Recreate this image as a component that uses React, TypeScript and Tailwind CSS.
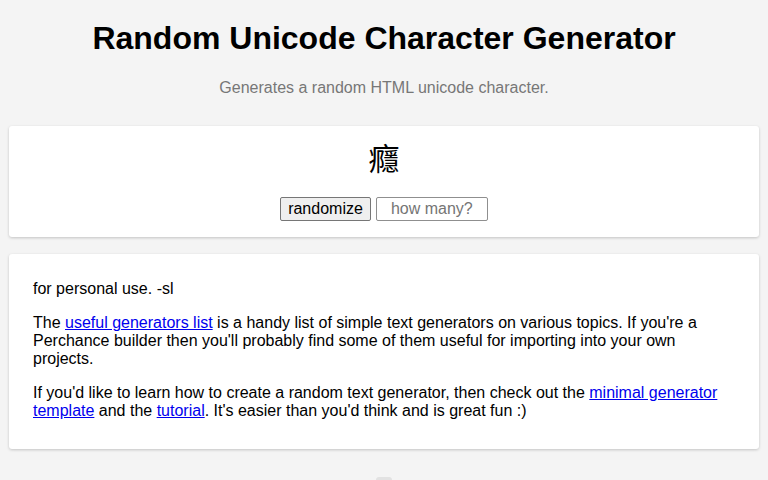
import React from "react";

export default function App() {
  return (
    <div className="min-h-[480px] bg-[#f4f4f4] text-black overflow-hidden h-[480px]" style={{ fontFamily: '"Liberation Sans", Arial, sans-serif' }}>
      <h1 className="text-[32px] font-bold text-center leading-[37px] pt-[20px]">Random Unicode Character Generator</h1>
      <p className="text-[16px] text-[#777] text-center leading-[18px] mt-[22px]">Generates a random HTML unicode character.</p>
      <div className="px-[9px] mt-[29px]">
        <div className="bg-white rounded-[3px] shadow-[0_1px_3px_rgba(0,0,0,0.2)] pt-[11px] pb-[16px] flex flex-col items-center">
          <div className="text-[31px] leading-[40px]" style={{ fontFamily: '"Noto Sans CJK SC", "Noto Sans CJK JP", sans-serif' }}>癮</div>
          <div className="flex gap-[5px] mt-[20px]">
            <button className="h-[24px] px-[7px] text-[16px] leading-[18px] bg-[#efefef] border border-[#767676] rounded-[2px] text-black">randomize</button>
            <input placeholder="how many?" className="h-[24px] w-[112px] text-[16px] text-center border border-[#8f8f8f] rounded-[2px] placeholder:text-[#757575] outline-none" />
          </div>
        </div>
        <div className="bg-white rounded-[3px] shadow-[0_1px_3px_rgba(0,0,0,0.2)] mt-[17px] px-[24px] pt-[26px] pb-[29px] text-[16px] leading-[18px]">
          <p>for personal use. -sl</p>
          <p className="mt-[16px]">
            The <a href="#" className="text-[#0000ee] underline">useful generators list</a> is a handy list of simple text generators on various topics. If you're a Perchance builder then you'll probably find some of them useful for importing into your own projects.
          </p>
          <p className="mt-[16px]">
            If you'd like to learn how to create a random text generator, then check out the <a href="#" className="text-[#0000ee] underline">minimal generator template</a> and the <a href="#" className="text-[#0000ee] underline">tutorial</a>. It's easier than you'd think and is great fun :)
          </p>
        </div>
        <div className="flex justify-center mt-[28px]">
          <div className="w-[16px] h-[8px] bg-[#e2e2e2] rounded-t-[3px]" />
        </div>
      </div>
    </div>
  );
}
